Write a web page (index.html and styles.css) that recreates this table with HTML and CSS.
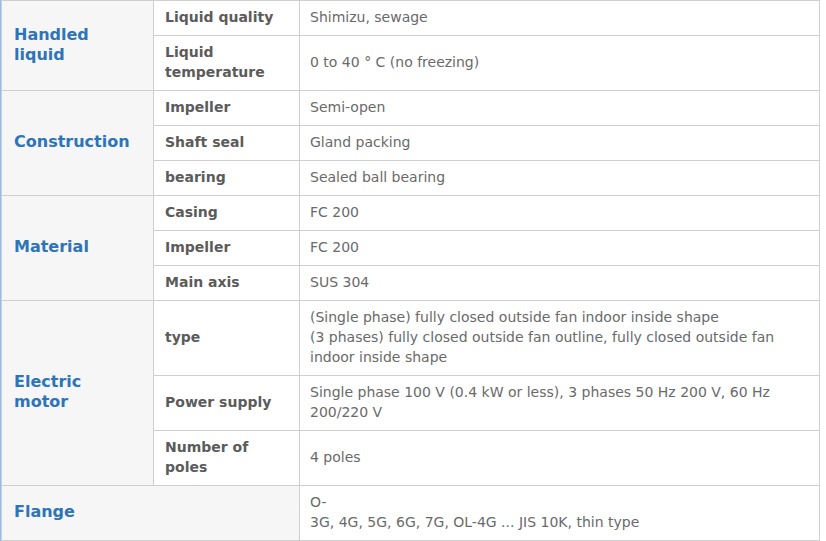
FILE: index.html
```html
<!DOCTYPE html>
<html lang="en">
<head>
<meta charset="utf-8">
<title>Specifications</title>
<link rel="stylesheet" href="styles.css">
</head>
<body>
<div class="wrap">
<table class="spec">
  <colgroup>
    <col class="c1">
    <col class="c2">
    <col class="c3">
  </colgroup>
  <tbody>
    <tr>
      <th class="group" rowspan="2">Handled<br>liquid</th>
      <th class="item">Liquid quality</th>
      <td>Shimizu, sewage</td>
    </tr>
    <tr>
      <th class="item">Liquid<br>temperature</th>
      <td>0 to 40 ° C (no freezing)</td>
    </tr>
    <tr>
      <th class="group" rowspan="3">Construction</th>
      <th class="item">Impeller</th>
      <td>Semi-open</td>
    </tr>
    <tr>
      <th class="item">Shaft seal</th>
      <td>Gland packing</td>
    </tr>
    <tr>
      <th class="item">bearing</th>
      <td>Sealed ball bearing</td>
    </tr>
    <tr>
      <th class="group" rowspan="3">Material</th>
      <th class="item">Casing</th>
      <td>FC 200</td>
    </tr>
    <tr>
      <th class="item">Impeller</th>
      <td>FC 200</td>
    </tr>
    <tr>
      <th class="item">Main axis</th>
      <td>SUS 304</td>
    </tr>
    <tr>
      <th class="group" rowspan="3">Electric<br>motor</th>
      <th class="item">type</th>
      <td>(Single phase) fully closed outside fan indoor inside shape<br>(3 phases) fully closed outside fan outline, fully closed outside fan indoor inside shape</td>
    </tr>
    <tr>
      <th class="item">Power supply</th>
      <td>Single phase 100 V (0.4 kW or less), 3 phases 50 Hz 200 V, 60 Hz 200/220 V</td>
    </tr>
    <tr>
      <th class="item">Number of<br>poles</th>
      <td>4 poles</td>
    </tr>
    <tr>
      <th class="group" colspan="2">Flange</th>
      <td>O-<br>3G, 4G, 5G, 6G, 7G, OL-4G ... JIS 10K, thin type</td>
    </tr>
  </tbody>
</table>
</div>
</body>
</html>
```

FILE: styles.css
```css
html, body {
  margin: 0;
  padding: 0;
  background: #ffffff;
}

.wrap {
  width: 820px;
  border-left: 1px solid #8ebfee;
  box-sizing: border-box;
}

.spec {
  width: 819px;
  border-collapse: collapse;
  table-layout: fixed;
  font-family: "DejaVu Sans", Verdana, sans-serif;
  font-size: 14px;
  line-height: 20px;
}

.c1 { width: 152px; }
.c2 { width: 146px; }

.spec th,
.spec td {
  border: 1px solid #cfcfcf;
  padding: 6px 10px 8px;
  vertical-align: middle;
  text-align: left;
}

.spec .group {
  background: #f6f6f6;
  color: #2e74b8;
  font-size: 16px;
  font-weight: bold;
  padding-left: 12px;
}

.spec .item {
  background: #ffffff;
  color: #5b5b5b;
  font-weight: bold;
  padding-left: 11px;
}

.spec td {
  color: #6a6a6a;
  font-weight: normal;
}
```
